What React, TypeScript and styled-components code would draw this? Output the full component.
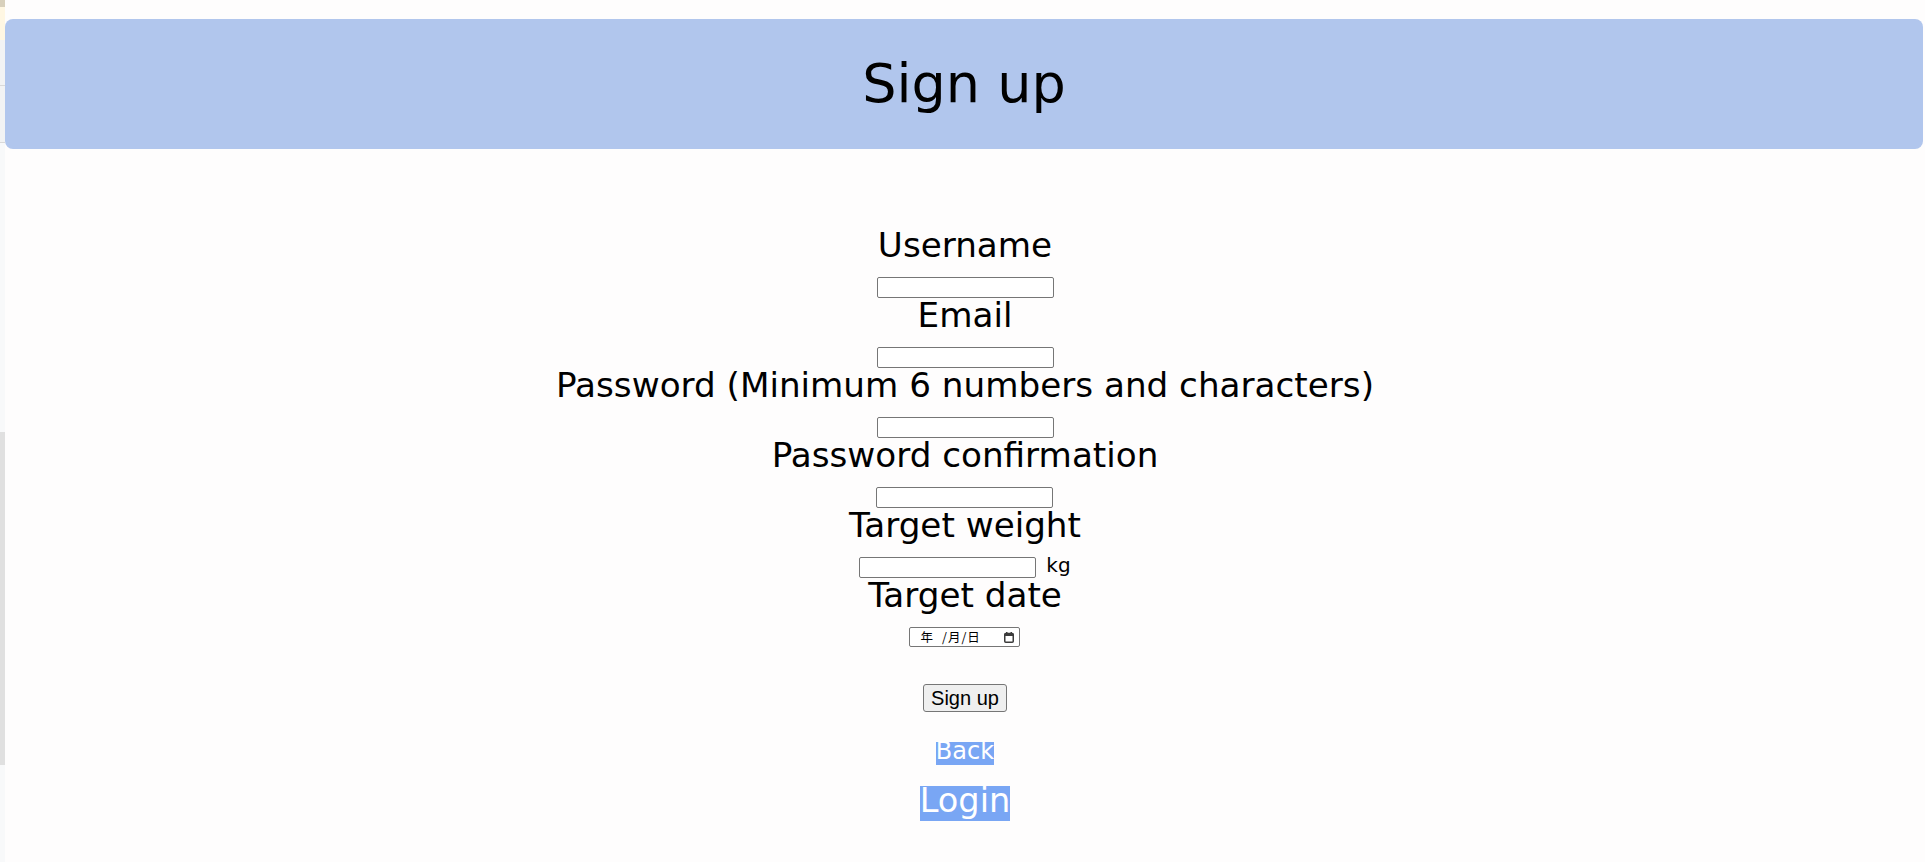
import React from "react";
import styled, { createGlobalStyle } from "styled-components";

const GlobalStyle = createGlobalStyle`
	html, body {
		margin: 0;
		padding: 0;
		background: #fefdfd;
		font-family: "DejaVu Sans", Verdana, sans-serif;
		color: #000;
	}
`;

const Page = styled.div`
	display: flex;
	min-height: 100vh;
`;

// thin strip of the neighbouring window at the left edge
const Gutter = styled.div`
	flex: 0 0 5px;
	background: linear-gradient(
		to bottom,
		#d8d0bc 0,
		#d8d0bc 7px,
		#fff7e3 7px,
		#fff7e3 40px,
		#f2f3f4 40px,
		#f2f3f4 85px,
		#d9d9d9 85px,
		#d9d9d9 86px,
		#f2f3f4 86px,
		#f2f3f4 142px,
		#d9d9d9 142px,
		#d9d9d9 143px,
		#f8f9fa 143px,
		#f8f9fa 432px,
		#e0e0e0 432px,
		#e0e0e0 765px,
		#f8f9fa 765px
	);
`;

const Main = styled.div`
	flex: 1;
	padding-top: 19px;
`;

const Header = styled.header`
	height: 130px;
	margin-right: 2px;
	border-radius: 8px;
	background: #b1c6ed;
	display: flex;
	align-items: center;
	justify-content: center;
`;

const Title = styled.h1`
	margin: 0;
	font-size: 54px;
	font-weight: normal;
	line-height: 1.164;
`;

const Form = styled.form`
	margin-top: 79px;
	display: flex;
	flex-direction: column;
	align-items: center;
`;

const Field = styled.div`
	display: flex;
	flex-direction: column;
	align-items: center;
`;

const Label = styled.label`
	font-size: 34.2px;
	line-height: 35px;
	margin-bottom: 14px;
	white-space: nowrap;
`;

const TextInput = styled.input`
	box-sizing: border-box;
	width: 177px;
	height: 21px;
	padding: 1px 2px;
	border: 1px solid #767676;
	border-radius: 2px;
	background: #fff;
	font-size: 13px;
`;

const InputRow = styled.div`
	display: flex;
	align-items: flex-start;
	gap: 10px;
	height: 21px;
`;

const Unit = styled.span`
	font-size: 20px;
	line-height: 17px;
`;

const DateBox = styled.div`
	box-sizing: border-box;
	width: 111px;
	height: 20px;
	border: 1px solid #767676;
	border-radius: 2px;
	background: #fff;
	display: flex;
	align-items: center;
	padding: 0 5px 0 10px;
	font-family: "Noto Sans CJK JP", "DejaVu Sans", sans-serif;
	font-size: 12.5px;
	line-height: 1;
`;

const DatePart = styled.span<{ $gap?: number }>`
	margin-right: ${p => p.$gap ?? 0}px;
`;

const CalendarIcon = styled.svg`
	margin-left: auto;
	display: block;
`;

const SubmitButton = styled.button`
	margin-top: 37px;
	box-sizing: border-box;
	height: 28px;
	padding: 0 7px;
	border: 1px solid #767676;
	border-radius: 3px;
	background: #efefef;
	font-family: "Liberation Sans", Arial, sans-serif;
	font-size: 20px;
	color: #000;
`;

const NavLink = styled.a<{ $size: number; $line: number; $pad: number; $top: number }>`
	margin-top: ${p => p.$top}px;
	display: block;
	background: #79a6f4;
	color: #fff;
	text-decoration: none;
	font-size: ${p => p.$size}px;
	line-height: ${p => p.$line}px;
	padding-bottom: ${p => p.$pad}px;
`;

const textFields = [
	{ id: "username", label: "Username", type: "text" },
	{ id: "email", label: "Email", type: "email" },
	{ id: "password", label: "Password (Minimum 6 numbers and characters)", type: "password" },
	{ id: "password_confirmation", label: "Password confirmation", type: "password" }
];

export default function App() {
	return (
		<>
			<GlobalStyle />
			<Page>
				<Gutter />
				<Main>
					<Header>
						<Title>Sign up</Title>
					</Header>
					<Form onSubmit={e => e.preventDefault()}>
						{textFields.map(f => (
							<Field key={f.id}>
								<Label htmlFor={f.id}>{f.label}</Label>
								<TextInput id={f.id} type={f.type} />
							</Field>
						))}
						<Field>
							<Label htmlFor="target_weight">Target weight</Label>
							<InputRow>
								<TextInput id="target_weight" type="text" />
								<Unit>kg</Unit>
							</InputRow>
						</Field>
						<Field>
							<Label>Target date</Label>
							<DateBox>
								<DatePart $gap={9}>年</DatePart>
								<DatePart $gap={1}>/</DatePart>
								<DatePart $gap={1}>月</DatePart>
								<DatePart $gap={1}>/</DatePart>
								<DatePart>日</DatePart>
								<CalendarIcon width="10" height="11" viewBox="0 0 10 11">
									<rect x="0.75" y="1.5" width="8.5" height="8.75" rx="1" fill="none" stroke="#3b3b3b" strokeWidth="1.5" />
									<rect x="0.75" y="1.5" width="8.5" height="2.5" fill="#3b3b3b" />
									<rect x="2" y="0" width="1.5" height="2" fill="#3b3b3b" />
									<rect x="6.5" y="0" width="1.5" height="2" fill="#3b3b3b" />
								</CalendarIcon>
							</DateBox>
						</Field>
						<SubmitButton type="submit">Sign up</SubmitButton>
						<NavLink href="#" $size={24} $line={19} $pad={4} $top={30}>
							Back
						</NavLink>
						<NavLink href="#" $size={33.6} $line={30} $pad={5} $top={21}>
							Login
						</NavLink>
					</Form>
				</Main>
			</Page>
		</>
	);
}
